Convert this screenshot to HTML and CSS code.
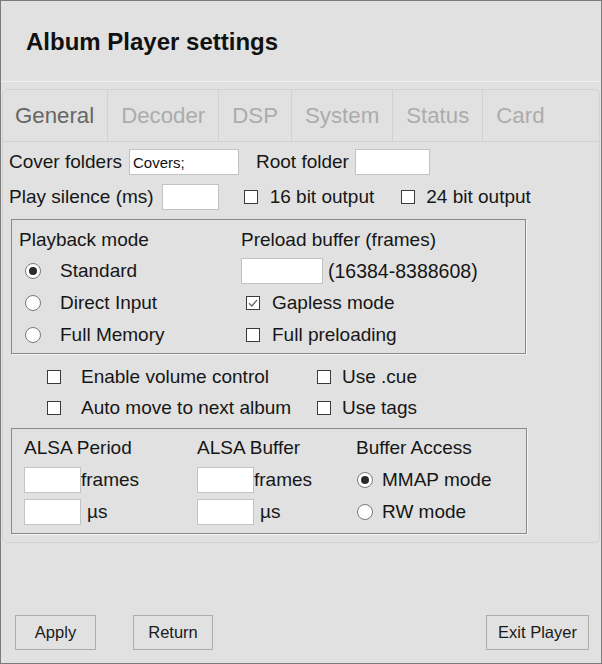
FILE: index.html
```html
<!DOCTYPE html>
<html>
<head>
<meta charset="utf-8">
<link rel="stylesheet" href="styles.css">
</head>
<body>
<div class="page">
  <div class="header"><h1 class="title">Album Player settings</h1></div>
  <div class="panel">
    <div class="tabs">
      <div class="tab active">General</div>
      <div class="tab">Decoder</div>
      <div class="tab">DSP</div>
      <div class="tab">System</div>
      <div class="tab">Status</div>
      <div class="tab last">Card</div>
    </div>
    <div class="content">
      <div class="row">
        <span>Cover folders</span>
        <span class="input w-covers ml7">Covers;</span>
        <span class="ml17">Root folder</span>
        <span class="input w-root ml6"></span>
      </div>
      <div class="row row2">
        <span>Play silence (ms)</span>
        <span class="input w-silence ml8"></span>
        <span class="cb ml25"></span><span class="ml12">16 bit output</span>
        <span class="cb ml27"></span><span class="ml11">24 bit output</span>
      </div>
      <div class="group group1">
        <div class="cell">Playback mode</div>
        <div class="cell">Preload buffer (frames)</div>
        <div class="cell"><span class="rb on ml6"></span><span class="ml19">Standard</span></div>
        <div class="cell"><span class="input w-preload"></span><span class="ml5 range">(16384-8388608)</span></div>
        <div class="cell"><span class="rb ml6"></span><span class="ml19">Direct Input</span></div>
        <div class="cell"><span class="cb ml5"><svg viewBox="0 0 12 12" width="12" height="12"><path d="M2 6.2 L4.8 9 L10 3" fill="none" stroke="#666" stroke-width="1.3"/></svg></span><span class="ml12">Gapless mode</span></div>
        <div class="cell"><span class="rb ml6"></span><span class="ml19">Full Memory</span></div>
        <div class="cell"><span class="cb ml5"></span><span class="ml12">Full preloading</span></div>
      </div>
      <div class="opts">
        <div class="cell"><span class="cb"></span><span class="ml20">Enable volume control</span></div>
        <div class="cell"><span class="cb"></span><span class="ml11">Use .cue</span></div>
        <div class="cell"><span class="cb"></span><span class="ml20">Auto move to next album</span></div>
        <div class="cell"><span class="cb"></span><span class="ml11">Use tags</span></div>
      </div>
      <div class="group group2">
        <div class="cell">ALSA Period</div>
        <div class="cell">ALSA Buffer</div>
        <div class="cell">Buffer Access</div>
        <div class="cell"><span class="input w-alsa"></span><span>frames</span></div>
        <div class="cell"><span class="input w-alsa"></span><span>frames</span></div>
        <div class="cell"><span class="rb on ml1"></span><span class="ml9">MMAP mode</span></div>
        <div class="cell"><span class="input w-alsa"></span><span class="ml6">µs</span></div>
        <div class="cell"><span class="input w-alsa"></span><span class="ml6">µs</span></div>
        <div class="cell"><span class="rb ml1"></span><span class="ml9">RW mode</span></div>
      </div>
    </div>
  </div>
  <div class="footer">
    <div class="btn w-apply">Apply</div>
    <div class="btn w-return">Return</div>
    <div class="btn w-exit">Exit Player</div>
  </div>
</div>
</body>
</html>
```
FILE: styles.css
```css
* { box-sizing: border-box; }
html, body { margin: 0; padding: 0; }
body {
  font-family: "Liberation Sans", Arial, sans-serif;
  color: #161616;
  background: #e1e1e1;
}
.page {
  width: 602px;
  height: 664px;
  border: 1px solid #7c7c7c;
  background: #e1e1e1;
  display: flex;
  flex-direction: column;
}
.header {
  height: 81px;
  border-bottom: 1px solid #f0f0f0;
  display: flex;
  align-items: center;
  padding: 2px 0 0 25px;
}
.title {
  margin: 0;
  font-size: 24px;
  font-weight: bold;
  color: #111;
}
.panel {
  margin: 7px 1px 0 1px;
  border: 1px solid #d2d2d2;
  border-radius: 6px;
  padding-bottom: 8px;
  background: #e1e1e1;
}
.tabs {
  display: flex;
  height: 52px;
  border-bottom: 1px solid #d2d2d2;
}
.tab {
  display: flex;
  align-items: center;
  padding: 0 13px;
  border-right: 1px solid #d2d2d2;
  font-size: 22.25px;
  color: #acacac;
}
.tab.active { padding-left: 12px; color: #666; }
.tab.last { border-right: none; }
.content {
  padding: 6px 0 0 6px;
  font-size: 19px;
}
.row {
  display: flex;
  align-items: center;
  height: 28px;
  white-space: nowrap;
}
.row2 { margin-top: 7px; }
.input {
  display: inline-flex;
  align-items: center;
  height: 26px;
  background: #fff;
  border: 1px solid #c3c3c3;
  font-size: 15px;
  padding-left: 3px;
  color: #111;
}
.w-covers { width: 110px; }
.w-root { width: 75px; }
.w-silence { width: 57px; }
.w-preload { width: 82px; }
.w-alsa { width: 57px; }
.range { font-size: 19.5px; }
.cb {
  display: inline-flex;
  align-items: center;
  justify-content: center;
  width: 14px;
  height: 14px;
  border: 1px solid #3a3a3a;
  background: #fff;
  flex: none;
}
.rb {
  display: inline-flex;
  align-items: center;
  justify-content: center;
  width: 16px;
  height: 16px;
  border-radius: 50%;
  border: 1px solid #7a7a7a;
  background: #fff;
  flex: none;
}
.rb.on::after {
  content: "";
  width: 8px;
  height: 8px;
  border-radius: 50%;
  background: #2a2a2a;
}
.group {
  border: 1px solid #8a8a8a;
  box-shadow: 1px 1px 0 #f3f3f3;
  display: grid;
  margin-left: 2px;
}
.group1 {
  width: 515px;
  margin-top: 8px;
  padding: 4px 0 3px 7px;
  grid-template-columns: 222px auto;
  grid-template-rows: 31px 32px 32px 31px;
}
.group2 {
  width: 516px;
  margin-top: 5px;
  padding: 3px 0 5px 12px;
  grid-template-columns: 173px 159px auto;
  grid-template-rows: 32px 32px 32px;
}
.cell {
  display: flex;
  align-items: center;
  white-space: nowrap;
}
.opts {
  display: grid;
  grid-template-columns: 270px auto;
  grid-template-rows: 31px 31px;
  margin-top: 7px;
  padding-left: 38px;
}
.footer {
  margin-top: auto;
  display: flex;
  padding: 0 12px 13px 14px;
}
.btn {
  height: 35px;
  border: 1px solid #adadad;
  background: #e1e1e1;
  font-size: 16.5px;
  color: #1a1a1a;
  display: flex;
  align-items: center;
  justify-content: center;
}
.w-apply { width: 81px; }
.w-return { width: 80px; margin-left: 37px; }
.w-exit { width: 103px; margin-left: auto; }
.ml1 { margin-left: 1px; }
.ml5 { margin-left: 5px; }
.ml6 { margin-left: 6px; }
.ml7 { margin-left: 7px; }
.ml8 { margin-left: 8px; }
.ml9 { margin-left: 9px; }
.ml11 { margin-left: 11px; }
.ml12 { margin-left: 12px; }
.ml13 { margin-left: 13px; }
.ml17 { margin-left: 17px; }
.ml19 { margin-left: 19px; }
.ml20 { margin-left: 20px; }
.ml25 { margin-left: 25px; }
.ml27 { margin-left: 27px; }
```
